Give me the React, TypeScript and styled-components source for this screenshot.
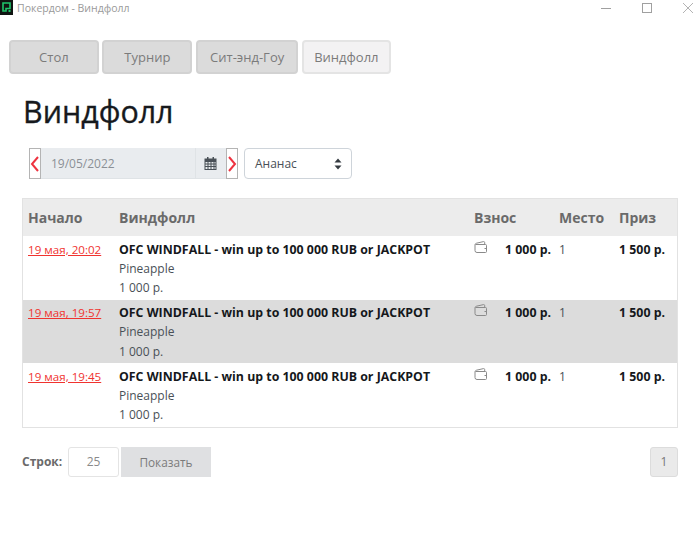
import React from 'react';
import styled, { createGlobalStyle } from 'styled-components';

const GlobalStyle = createGlobalStyle`
  html, body {
    margin: 0;
    padding: 0;
    background: #fff;
    font-family: 'Open Sans', 'Noto Sans', sans-serif;
    color: #212529;
  }
`;

const Page = styled.div`
  width: 700px;
  height: 534px;
  overflow: hidden;
  display: flex;
  flex-direction: column;
`;

const TitleBar = styled.div`
  display: flex;
  align-items: center;
  height: 15px;
  gap: 4px;
`;

const AppLogo = styled.svg`
  width: 13px;
  height: 15px;
  flex: none;
`;

const TitleText = styled.span`
  font-size: 10.5px;
  color: #9a9a9a;
  flex: 1;
`;

const WindowButtons = styled.div`
  display: flex;
  align-items: center;
  gap: 31px;
  padding: 0 7px 0 0;
`;

const Tabs = styled.nav`
  display: flex;
  gap: 3.5px;
  padding: 25px 0 0 8.9px;
`;

const Tab = styled.div<{ $active?: boolean; $width: number }>`
  box-sizing: border-box;
  width: ${(p) => p.$width}px;
  height: 34px;
  display: flex;
  align-items: center;
  justify-content: center;
  border-radius: 4px;
  border: 2px solid ${(p) => (p.$active ? '#e4e4e4' : '#d2d2d2')};
  background: ${(p) => (p.$active ? '#f3f2f3' : '#dbdbdb')};
  color: #7b7b7b;
  font-size: 13px;
`;

const Content = styled.main`
  padding: 0 22px;
  display: flex;
  flex-direction: column;
`;

const Heading = styled.h1`
  margin: 16px 0 0 1px;
  height: 46px;
  font-size: 30.4px;
  line-height: 44px;
  font-weight: 400;
  -webkit-text-stroke: 0.35px #16191d;
  color: #16191d;
`;

const Filters = styled.div`
  display: flex;
  align-items: center;
  margin: 12px 0 0 7px;
  gap: 6px;
`;

const DateGroup = styled.div`
  display: flex;
  height: 31px;
`;

const Arrow = styled.div`
  box-sizing: border-box;
  width: 12px;
  height: 31px;
  border: 1px solid #b4b4b4;
  display: flex;
  align-items: center;
  justify-content: center;
  background: #fff;
`;

const DateValue = styled.div`
  box-sizing: border-box;
  width: 154px;
  background: #e9ecef;
  color: #8b9096;
  font-size: 12px;
  display: flex;
  align-items: center;
  padding-left: 10px;
  border-bottom: 1px solid #dfe3e6;
`;

const CalendarAddon = styled.div`
  box-sizing: border-box;
  width: 31px;
  background: #e9ecef;
  border-left: 1px solid #dfe3e6;
  border-bottom: 1px solid #dfe3e6;
  display: flex;
  align-items: center;
  justify-content: center;
  padding-right: 2px;
`;

const Select = styled.div`
  box-sizing: border-box;
  width: 108px;
  height: 31px;
  border: 1px solid #ced4da;
  border-radius: 4px;
  display: flex;
  align-items: center;
  justify-content: space-between;
  padding: 0 9px 0 10px;
  font-size: 12px;
  color: #495057;
`;

const TableWrap = styled.div`
  margin-top: 19px;
  width: 656px;
  border: 1px solid #e2e2e2;
  box-sizing: border-box;
`;

const Table = styled.table`
  width: 654px;
  border-collapse: collapse;
  table-layout: fixed;
`;

const HeadCell = styled.th`
  background: #ececec;
  height: 37px;
  padding: 0 5px;
  text-align: left;
  font-size: 14px;
  font-weight: 700;
  color: #6a6a6a;
  vertical-align: middle;
`;

const Row = styled.tr<{ $shaded?: boolean }>`
  background: ${(p) => (p.$shaded ? '#dcdcdc' : '#fff')};
`;

const Cell = styled.td`
  height: 63.67px;
  box-sizing: border-box;
  padding: 3.6px 5px 0;
  vertical-align: top;
  font-size: 12px;
  line-height: 19.2px;
  color: #495057;
`;

const StartLink = styled.a`
  font-size: 11.6px;
  color: #f0332f;
  text-decoration: underline;
  white-space: nowrap;
`;

const EventName = styled.div`
  font-size: 12.35px;
  font-weight: 700;
  color: #15181b;
  white-space: nowrap;
`;

const BuyIn = styled.div`
  display: flex;
  justify-content: space-between;
  margin-right: -2px;
`;

const WalletIcon = styled.svg`
  width: 14px;
  height: 12px;
  flex: none;
  margin-top: 1px;
`;

const Money = styled.span`
  font-size: 12.35px;
  font-weight: 700;
  color: #15181b;
  white-space: nowrap;
`;

const Footer = styled.div`
  display: flex;
  align-items: center;
  margin-top: 19px;
`;

const RowsLabel = styled.span`
  font-size: 12px;
  font-weight: 700;
  color: #6a6a6a;
  width: 46px;
`;

const RowsInput = styled.div`
  box-sizing: border-box;
  width: 51px;
  height: 30px;
  border: 1px solid #e4e4e4;
  border-radius: 3px;
  display: flex;
  align-items: center;
  justify-content: center;
  font-size: 12px;
  color: #8a8a8a;
`;

const ShowButton = styled.div`
  width: 90px;
  height: 30px;
  margin-left: 2px;
  background: #dfe0e2;
  display: flex;
  align-items: center;
  justify-content: center;
  font-size: 11.8px;
  color: #7b7b7b;
`;

const PageButton = styled.div`
  box-sizing: border-box;
  width: 28px;
  height: 30px;
  margin-left: auto;
  background: #eaeaea;
  border: 1px solid #dcdcdc;
  border-radius: 3px;
  display: flex;
  align-items: center;
  justify-content: center;
  font-size: 12px;
  color: #777;
`;

const Chevron = ({ dir }: { dir: 'left' | 'right' }) => (
  <svg width="10" height="18" viewBox="0 0 10 18" fill="none">
    <path
      d={dir === 'left' ? 'M8 2 2 9l6 7' : 'M2 2l6 7-6 7'}
      stroke="#ee3340"
      strokeWidth="2"
    />
  </svg>
);

const Wallet = () => (
  <WalletIcon viewBox="0 0 14 12" fill="none" stroke="#8a8a8a" strokeWidth="1">
    <path d="M1 4v5.500A2 2 0 0 0 3 11.500h8.500a1 1 0 0 0 1-1V4.500a1 1 0 0 0-1-1H1.500" />
    <path d="M1 4c0-1 .5-1.500 1.500-1.800L9.500.6c.8-.1 1.200.3 1.200 1v1.900" />
    <path d="M10.500 7.500h2" />
  </WalletIcon>
);

const rows = [
  { start: '19 мая, 20:02', shaded: false },
  { start: '19 мая, 19:57', shaded: true },
  { start: '19 мая, 19:45', shaded: false },
];

export default function App() {
  return (
    <Page>
      <GlobalStyle />
      <TitleBar>
        <AppLogo viewBox="0 0 13 15">
          <rect width="13" height="15" fill="#101512" />
          <path d="M3 3h7v5.500H6V11H3Z" fill="none" stroke="#1fc46b" strokeWidth="1.600" />
          <rect x="8.500" y="10" width="2" height="2" fill="#1fc46b" />
        </AppLogo>
        <TitleText>Покердом - Виндфолл</TitleText>
        <WindowButtons>
          <svg width="10" height="10" viewBox="0 0 10 10">
            <path d="M0 5.500h10" stroke="#a0a0a0" />
          </svg>
          <svg width="10" height="10" viewBox="0 0 10 10" fill="none">
            <rect x="0.500" y="0.500" width="9" height="9" stroke="#a0a0a0" />
          </svg>
          <svg width="10" height="10" viewBox="0 0 10 10" fill="none">
            <path d="m0 0 10 10M10 0 0 10" stroke="#a0a0a0" strokeWidth="0.800" />
          </svg>
        </WindowButtons>
      </TitleBar>
      <Tabs>
        <Tab $width={90}>Стол</Tab>
        <Tab $width={90}>Турнир</Tab>
        <Tab $width={102.5}>Сит-энд-Гоу</Tab>
        <Tab $width={89} $active>Виндфолл</Tab>
      </Tabs>
      <Content>
        <Heading>Виндфолл</Heading>
        <Filters>
          <DateGroup>
            <Arrow>
              <Chevron dir="left" />
            </Arrow>
            <DateValue>19/05/2022</DateValue>
            <CalendarAddon>
              <svg width="13" height="13" viewBox="0 0 13 13">
                <path
                  d="M3 0h1.500v1.500h4V0H10v1.500h2.500V13H.5V1.500H3ZM1.500 5v1.500h2V5Zm3 0v1.500h2V5Zm3 0v1.500h2V5Zm3 0v1.500h1V5Zm-9 2.500V9h2V7.500Zm3 0V9h2V7.500Zm3 0V9h2V7.500Zm3 0V9h1V7.500Zm-9 2.500v2h2v-2Zm3 0v2h2v-2Zm3 0v2h2v-2Zm3 0v2h1v-2Z"
                  fill="#495057"
                  fillRule="evenodd"
                />
              </svg>
            </CalendarAddon>
            <Arrow>
              <Chevron dir="right" />
            </Arrow>
          </DateGroup>
          <Select>
            Ананас
            <svg width="8" height="12" viewBox="0 0 8 12">
              <path d="M4 0.500 7.500 4.500H.5ZM4 11.500.5 7.500h7Z" fill="#343a40" />
            </svg>
          </Select>
        </Filters>
        <TableWrap>
          <Table>
            <colgroup>
              <col width="91" />
              <col width="355" />
              <col width="85" />
              <col width="60" />
              <col width="63" />
            </colgroup>
            <thead>
              <tr>
                <HeadCell>Начало</HeadCell>
                <HeadCell>Виндфолл</HeadCell>
                <HeadCell>Взнос</HeadCell>
                <HeadCell>Место</HeadCell>
                <HeadCell>Приз</HeadCell>
              </tr>
            </thead>
            <tbody>
              {rows.map((row) => (
                <Row key={row.start} $shaded={row.shaded}>
                  <Cell>
                    <StartLink>{row.start}</StartLink>
                  </Cell>
                  <Cell>
                    <EventName>OFC WINDFALL - win up to 100 000 RUB or JACKPOT</EventName>
                    <div>Pineapple</div>
                    <div>1 000 р.</div>
                  </Cell>
                  <Cell>
                    <BuyIn>
                      <Wallet />
                      <Money>1 000 р.</Money>
                    </BuyIn>
                  </Cell>
                  <Cell>1</Cell>
                  <Cell>
                    <Money>1 500 р.</Money>
                  </Cell>
                </Row>
              ))}
            </tbody>
          </Table>
        </TableWrap>
        <Footer>
          <RowsLabel>Строк:</RowsLabel>
          <RowsInput>25</RowsInput>
          <ShowButton>Показать</ShowButton>
          <PageButton>1</PageButton>
        </Footer>
      </Content>
    </Page>
  );
}
